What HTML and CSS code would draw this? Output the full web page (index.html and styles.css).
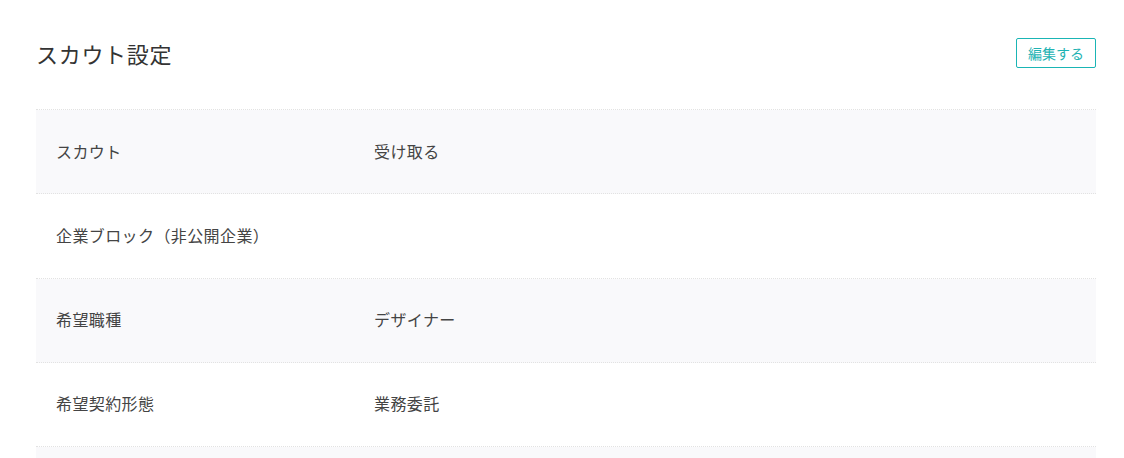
FILE: index.html
```html
<!DOCTYPE html>
<html>
<head>
  <meta charset="utf-8">
  <title>スカウト設定</title>
  <link rel="stylesheet" href="styles.css">
</head>
<body>
  <div class="page">
    <div class="header">
      <h1>スカウト設定</h1>
      <button class="edit-btn">編集する</button>
    </div>

    <div class="settings">
      <div class="row">
        <div class="label">スカウト</div>
        <div class="value">受け取る</div>
      </div>
      <div class="row">
        <div class="label">企業ブロック（非公開企業）</div>
        <div class="value"></div>
      </div>
      <div class="row">
        <div class="label">希望職種</div>
        <div class="value">デザイナー</div>
      </div>
      <div class="row">
        <div class="label">希望契約形態</div>
        <div class="value">業務委託</div>
      </div>
      <div class="row">
        <div class="label">&nbsp;</div>
        <div class="value"></div>
      </div>
    </div>
  </div>
</body>
</html>
```

FILE: styles.css
```css
body {
  margin: 0;
  font-family: "Noto Sans CJK JP", "Noto Sans", sans-serif;
  color: #444;
  background: #fff;
}

.page {
  padding: 38px 28px 0 36px;
}

.header {
  display: flex;
  justify-content: space-between;
  align-items: center;
  height: 30px;
  margin-bottom: 41px;
}

h1 {
  margin: 0;
  font-size: 22px;
  font-weight: normal;
  letter-spacing: 0.7px;
  color: #333;
}

.edit-btn {
  height: 30px;
  padding: 0 11px;
  font-family: inherit;
  font-size: 14px;
  color: #1fb3b3;
  background: #fff;
  border: 1px solid #1ab5b5;
  border-radius: 2px;
  cursor: pointer;
}

.settings {
  border-top: 1px dotted #e2e2e2;
}

.row {
  display: flex;
  align-items: center;
  height: 83.25px;
  border-bottom: 1px dotted #e2e2e2;
  font-size: 16px;
  letter-spacing: 0.4px;
}

.row:nth-child(odd) {
  background-color: #f9f9fb;
}

.label {
  width: 318px;
  padding-left: 20px;
  box-sizing: border-box;
  margin-top: -2px;
}

.value {
  flex: 1;
  padding-left: 20px;
  margin-top: -2px;
}
```
